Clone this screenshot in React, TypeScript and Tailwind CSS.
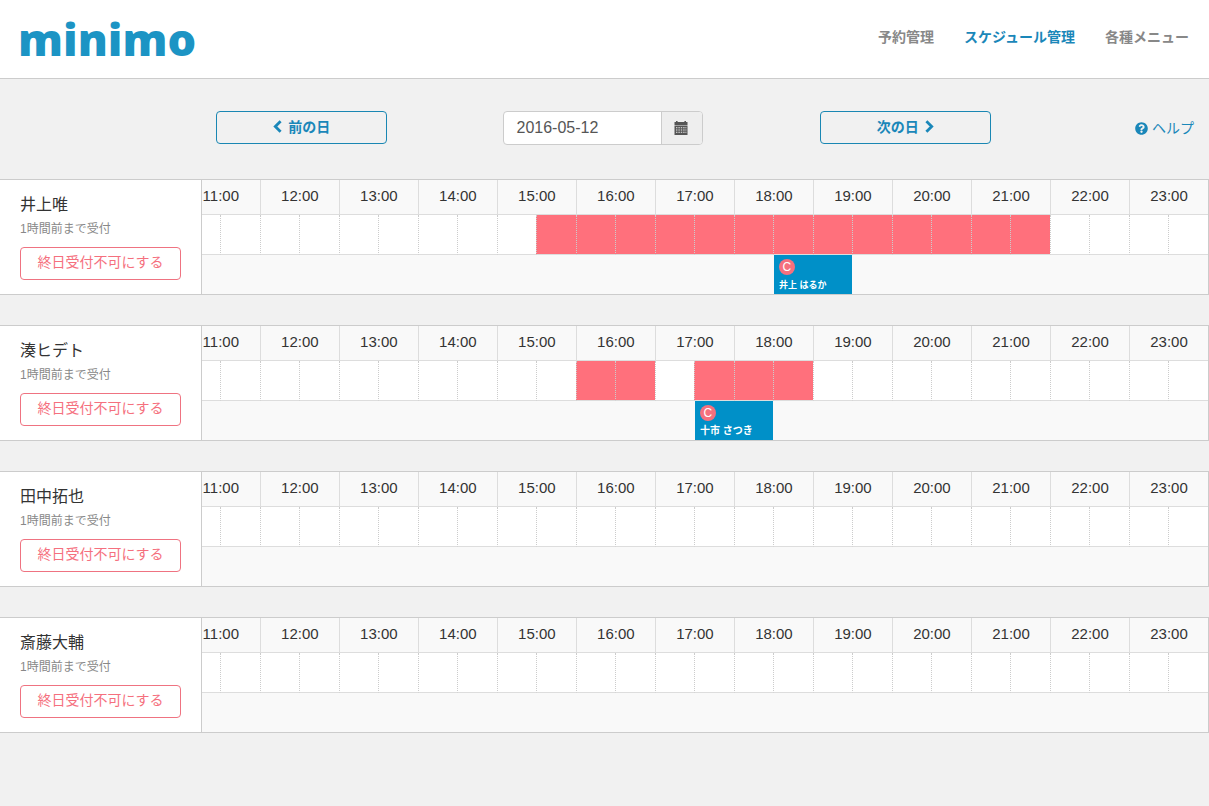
import React from 'react';
import { FaQuestionCircle } from 'react-icons/fa';

interface Booking {
  name: string;
  start: number;
  hours: number;
  compact?: boolean;
}

interface Staff {
  id: string;
  name: string;
  /** [from, to) in hours */
  blocked: [number, number][];
  booking?: Booking;
}

const FIRST_HOUR = 11;
const HOURS = Array.from({ length: 13 }, (_, i) => FIRST_HOUR + i);

// Each hour label sits in the middle of its column, so the first slot starts half an hour earlier
const SLOTS = Array.from({ length: HOURS.length * 2 }, (_, i) => FIRST_HOUR - 0.5 + i / 2);

const NAV = [
  { label: '予約管理', active: false },
  { label: 'スケジュール管理', active: true },
  { label: '各種メニュー', active: false },
];

const STAFF: Staff[] = [
  {
    id: 'inoue',
    name: '井上唯',
    blocked: [[15, 21.5]],
    booking: { name: '井上 はるか', start: 18, hours: 1, compact: true },
  },
  {
    id: 'minato',
    name: '湊ヒデト',
    blocked: [[15.5, 16.5], [17, 18.5]],
    booking: { name: '十市 さつき', start: 17, hours: 1 },
  },
  { id: 'tanaka', name: '田中拓也', blocked: [] },
  { id: 'saito', name: '斎藤大輔', blocked: [] },
];

const Chevron: React.FC<{ dir: 'left' | 'right' }> = ({ dir }) => (
  <svg width="9" height="13" viewBox="0 0 9 13" fill="none" stroke="currentColor" strokeWidth="2.8" aria-hidden="true">
    <polyline points={dir === 'left' ? '7.6,1.2 2.3,6.5 7.6,11.8' : '1.4,1.2 6.7,6.5 1.4,11.8'} />
  </svg>
);

const CalendarIcon = () => (
  <svg width="14" height="14" viewBox="0 0 14 14" fill="currentColor" aria-hidden="true">
    <path d="M2 0h1.6v1h6.8V0H12v1h1.5v3H.5V1H2z" />
    <path
      fillRule="evenodd"
      d="M.5 4.6h13V14H.5z M2 6.2v1h1.4v-1z M4.4 6.2v1h1.4v-1z M6.8 6.2v1h1.4v-1z M9.2 6.2v1h1.4v-1z M11.4 6.2v1h1v-1z M2 8.5v1h1.4v-1z M4.4 8.5v1h1.4v-1z M6.8 8.5v1h1.4v-1z M9.2 8.5v1h1.4v-1z M11.4 8.5v1h1v-1z M2 10.8v1h1.4v-1z M4.4 10.8v1h1.4v-1z M6.8 10.8v1h1.4v-1z M9.2 10.8v1h1.4v-1z M11.4 10.8v1h1v-1z"
    />
  </svg>
);

const Header = () => (
  <header className="flex h-[79px] items-center justify-between border-b border-[#ccc] bg-white pr-5 pl-[18px]">
    <a href="#" className="font-['Open_Sans','Liberation_Sans',sans-serif] text-[45px] leading-[60px] font-extrabold text-[#1c94c4]">
      minimo
    </a>
    <nav className="flex gap-[30px] pb-1 text-sm font-bold">
      {NAV.map((item) => (
        <a key={item.label} href="#" className={item.active ? 'text-[#1a87b9]' : 'text-[#888]'}>
          {item.label}
        </a>
      ))}
    </nav>
  </header>
);

const dayButton =
  'flex h-[33px] w-full items-center justify-center gap-1.5 rounded border border-[#1a87b3] pb-0.5 text-sm font-bold text-[#1a87b9]';

const DateBar = () => (
  <div className="grid grid-cols-12 pt-8 pr-0.5 pb-[34px]">
    <div className="col-span-2 col-start-3 px-[15px]">
      <button type="button" className={dayButton}>
        <Chevron dir="left" />
        前の日
      </button>
    </div>
    <div className="col-span-4 flex justify-center">
      <div className="flex h-[34px] w-[200px] overflow-hidden rounded border border-[#ccc] bg-white">
        <input
          type="text"
          aria-label="日付"
          defaultValue="2016-05-12"
          className="min-w-0 flex-1 px-3 text-base text-[#555] outline-none"
        />
        <button
          type="button"
          aria-label="カレンダー"
          className="flex w-[41px] items-center justify-center border-l border-[#ccc] bg-[#eee] pr-0.5 text-[#555]"
        >
          <CalendarIcon />
        </button>
      </div>
    </div>
    <div className="col-span-2 px-[15px]">
      <button type="button" className={dayButton}>
        次の日
        <Chevron dir="right" />
      </button>
    </div>
    <div className="col-span-2 flex items-center justify-end px-[13px]">
      <a href="#" className="flex items-center gap-1 text-sm text-[#1a87b9]">
        <FaQuestionCircle size={13} />
        ヘルプ
      </a>
    </div>
  </div>
);

const BookingRow: React.FC<{ booking?: Booking }> = ({ booking }) => {
  if (!booking) {
    return (
      <tr className="h-[39px]">
        <td colSpan={SLOTS.length} />
      </tr>
    );
  }
  const before = SLOTS.indexOf(booking.start);
  const span = booking.hours * 2;
  return (
    <tr className="h-[39px]">
      <td colSpan={before} />
      <td colSpan={span} className="p-0 pl-px">
        <div className="flex h-[39px] flex-col bg-[#0090c8] px-[5px] pt-1 text-white">
          <span className="flex size-4 shrink-0 items-center justify-center rounded-full bg-[#f5707e] text-xs leading-4">
            C
          </span>
          <span
            className={`leading-5 font-bold whitespace-nowrap ${booking.compact ? 'text-[9px]' : 'text-[10px]'}`}
          >
            {booking.name}
          </span>
        </div>
      </td>
      <td colSpan={SLOTS.length - before - span} />
    </tr>
  );
};

const Timeline: React.FC<{ staff: Staff }> = ({ staff }) => (
  <div className="flex min-w-0 flex-1 justify-end overflow-hidden border-r border-[#ccc] bg-[#f9f9f9]">
    <table className="w-[1027px] shrink-0 table-fixed border-separate border-spacing-0">
      <colgroup>
        {SLOTS.map((slot, i) => (
          <col key={slot} className={i % 2 === 0 ? 'w-[39px]' : 'w-[40px]'} />
        ))}
      </colgroup>
      <thead>
        <tr className="h-[35px]">
          {HOURS.map((hour) => (
            <th
              key={hour}
              colSpan={2}
              className="border-b border-l border-[#ddd] p-0 pb-0.5 text-center text-[15px] leading-5 font-normal text-[#333]"
            >
              {hour}:00
            </th>
          ))}
        </tr>
      </thead>
      <tbody>
        <tr className="h-10">
          {SLOTS.map((slot) => {
            const blocked = staff.blocked.some(([from, to]) => slot >= from && slot < to);
            return (
              <td
                key={slot}
                className={`border-b border-l border-b-[#ddd] border-l-[#ccc] p-0 [border-left-style:dotted] ${
                  blocked ? 'bg-[#ff707c]' : 'bg-white'
                }`}
              />
            );
          })}
        </tr>
        <BookingRow booking={staff.booking} />
      </tbody>
    </table>
  </div>
);

const StaffRow: React.FC<{ staff: Staff }> = ({ staff }) => (
  <section className="flex border-y border-[#ccc]">
    <div className="w-[202px] shrink-0 border-r border-[#ccc] bg-white px-5 pt-[13px] pb-3.5">
      <h2 className="text-base leading-6 text-[#333]">{staff.name}</h2>
      <p className="text-xs leading-6 text-[#888]">1時間前まで受付</p>
      <button
        type="button"
        className="mt-1.5 block h-[33px] w-full rounded border border-[#ef7381] pb-1 text-sm text-[#f5707e]"
      >
        終日受付不可にする
      </button>
    </div>
    <Timeline staff={staff} />
  </section>
);

export default function App() {
  return (
    <div className="min-h-screen bg-[#f1f1f1] font-['Liberation_Sans','Noto_Sans_CJK_JP',sans-serif]">
      <Header />
      <main>
        <DateBar />
        <div className="flex flex-col gap-[30px]">
          {STAFF.map((staff) => (
            <StaffRow key={staff.id} staff={staff} />
          ))}
        </div>
      </main>
    </div>
  );
}
